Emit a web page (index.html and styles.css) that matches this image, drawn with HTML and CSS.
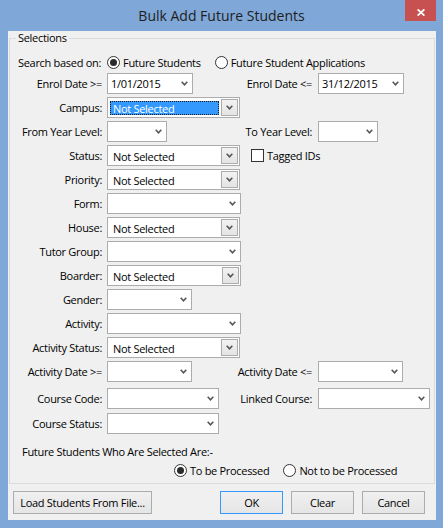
FILE: index.html
```html
<!DOCTYPE html>
<html>
<head>
<meta charset="utf-8">
<title>Bulk Add Future Students</title>
<link rel="stylesheet" href="styles.css">
</head>
<body>
<div class="window">
  <div class="titlebar">
    <span class="title">Bulk Add Future Students</span>
    <span class="close"><svg width="8" height="7" viewBox="0 0 8 7"><path d="M0.6 0.4 L7.4 6.6 M7.4 0.4 L0.6 6.6" stroke="#fff" stroke-width="1.8" fill="none"/></svg></span>
  </div>
  <div class="client">
    <fieldset class="group">
      <legend>Selections</legend>
      <div class="form">
        <div class="row search">
          <span class="lbl">Search based on:</span>
          <div class="opts">
            <span class="opt"><span class="radio on"></span><span>Future Students</span></span>
            <span class="opt"><span class="radio"></span><span>Future Student Applications</span></span>
          </div>
        </div>
        <div class="row enrol">
          <span class="lbl">Enrol Date &gt;=</span>
          <div class="combo date w86"><span class="val">1/01/2015</span><svg class="chev" width="7" height="5" viewBox="0 0 7 5"><path d="M0.7 0.8 L3.5 3.8 L6.3 0.8" stroke="#555" stroke-width="1.6" fill="none"/></svg></div>
          <span class="lbl2">Enrol Date &lt;=</span>
          <div class="combo date w86 c4"><span class="val">31/12/2015</span><svg class="chev" width="7" height="5" viewBox="0 0 7 5"><path d="M0.7 0.8 L3.5 3.8 L6.3 0.8" stroke="#555" stroke-width="1.6" fill="none"/></svg></div>
        </div>
        <div class="row">
          <span class="lbl">Campus:</span>
          <div class="combo list w133"><span class="val sel">Not Selected</span><span class="dd"><svg class="chev" width="7" height="5" viewBox="0 0 7 5"><path d="M0.7 0.8 L3.5 3.8 L6.3 0.8" stroke="#555" stroke-width="1.6" fill="none"/></svg></span></div>
        </div>
        <div class="row">
          <span class="lbl">From Year Level:</span>
          <div class="combo w60"><span class="val"></span><svg class="chev" width="7" height="5" viewBox="0 0 7 5"><path d="M0.7 0.8 L3.5 3.8 L6.3 0.8" stroke="#555" stroke-width="1.6" fill="none"/></svg></div>
          <span class="lbl2">To Year Level:</span>
          <div class="combo w60 c4"><span class="val"></span><svg class="chev" width="7" height="5" viewBox="0 0 7 5"><path d="M0.7 0.8 L3.5 3.8 L6.3 0.8" stroke="#555" stroke-width="1.6" fill="none"/></svg></div>
        </div>
        <div class="row">
          <span class="lbl">Status:</span>
          <div class="combo list w133"><span class="val">Not Selected</span><span class="dd"><svg class="chev" width="7" height="5" viewBox="0 0 7 5"><path d="M0.7 0.8 L3.5 3.8 L6.3 0.8" stroke="#555" stroke-width="1.6" fill="none"/></svg></span></div>
          <span class="check"><span class="box"></span><span>Tagged IDs</span></span>
        </div>
        <div class="row">
          <span class="lbl">Priority:</span>
          <div class="combo list w133"><span class="val">Not Selected</span><span class="dd"><svg class="chev" width="7" height="5" viewBox="0 0 7 5"><path d="M0.7 0.8 L3.5 3.8 L6.3 0.8" stroke="#555" stroke-width="1.6" fill="none"/></svg></span></div>
        </div>
        <div class="row">
          <span class="lbl">Form:</span>
          <div class="combo w134"><span class="val"></span><svg class="chev" width="7" height="5" viewBox="0 0 7 5"><path d="M0.7 0.8 L3.5 3.8 L6.3 0.8" stroke="#555" stroke-width="1.6" fill="none"/></svg></div>
        </div>
        <div class="row">
          <span class="lbl">House:</span>
          <div class="combo list w133"><span class="val">Not Selected</span><span class="dd"><svg class="chev" width="7" height="5" viewBox="0 0 7 5"><path d="M0.7 0.8 L3.5 3.8 L6.3 0.8" stroke="#555" stroke-width="1.6" fill="none"/></svg></span></div>
        </div>
        <div class="row">
          <span class="lbl">Tutor Group:</span>
          <div class="combo w134"><span class="val"></span><svg class="chev" width="7" height="5" viewBox="0 0 7 5"><path d="M0.7 0.8 L3.5 3.8 L6.3 0.8" stroke="#555" stroke-width="1.6" fill="none"/></svg></div>
        </div>
        <div class="row">
          <span class="lbl">Boarder:</span>
          <div class="combo list w134"><span class="val">Not Selected</span><span class="dd"><svg class="chev" width="7" height="5" viewBox="0 0 7 5"><path d="M0.7 0.8 L3.5 3.8 L6.3 0.8" stroke="#555" stroke-width="1.6" fill="none"/></svg></span></div>
        </div>
        <div class="row">
          <span class="lbl">Gender:</span>
          <div class="combo w85"><span class="val"></span><svg class="chev" width="7" height="5" viewBox="0 0 7 5"><path d="M0.7 0.8 L3.5 3.8 L6.3 0.8" stroke="#555" stroke-width="1.6" fill="none"/></svg></div>
        </div>
        <div class="row">
          <span class="lbl">Activity:</span>
          <div class="combo w134"><span class="val"></span><svg class="chev" width="7" height="5" viewBox="0 0 7 5"><path d="M0.7 0.8 L3.5 3.8 L6.3 0.8" stroke="#555" stroke-width="1.6" fill="none"/></svg></div>
        </div>
        <div class="row">
          <span class="lbl">Activity Status:</span>
          <div class="combo list w133"><span class="val">Not Selected</span><span class="dd"><svg class="chev" width="7" height="5" viewBox="0 0 7 5"><path d="M0.7 0.8 L3.5 3.8 L6.3 0.8" stroke="#555" stroke-width="1.6" fill="none"/></svg></span></div>
        </div>
        <div class="row">
          <span class="lbl">Activity Date &gt;=</span>
          <div class="combo date w85"><span class="val"></span><svg class="chev" width="7" height="5" viewBox="0 0 7 5"><path d="M0.7 0.8 L3.5 3.8 L6.3 0.8" stroke="#555" stroke-width="1.6" fill="none"/></svg></div>
          <span class="lbl2">Activity Date &lt;=</span>
          <div class="combo date w85 c4"><span class="val"></span><svg class="chev" width="7" height="5" viewBox="0 0 7 5"><path d="M0.7 0.8 L3.5 3.8 L6.3 0.8" stroke="#555" stroke-width="1.6" fill="none"/></svg></div>
        </div>
        <div class="row course">
          <span class="lbl">Course Code:</span>
          <div class="combo w112"><span class="val"></span><svg class="chev" width="7" height="5" viewBox="0 0 7 5"><path d="M0.7 0.8 L3.5 3.8 L6.3 0.8" stroke="#555" stroke-width="1.6" fill="none"/></svg></div>
          <span class="lbl2">Linked Course:</span>
          <div class="combo w112 c4"><span class="val"></span><svg class="chev" width="7" height="5" viewBox="0 0 7 5"><path d="M0.7 0.8 L3.5 3.8 L6.3 0.8" stroke="#555" stroke-width="1.6" fill="none"/></svg></div>
        </div>
        <div class="row cstatus">
          <span class="lbl">Course Status:</span>
          <div class="combo w112"><span class="val"></span><svg class="chev" width="7" height="5" viewBox="0 0 7 5"><path d="M0.7 0.8 L3.5 3.8 L6.3 0.8" stroke="#555" stroke-width="1.6" fill="none"/></svg></div>
        </div>
        <div class="note">Future Students Who Are Selected Are:-</div>
        <div class="proc">
          <span class="opt"><span class="radio on"></span><span>To be Processed</span></span>
          <span class="opt"><span class="radio"></span><span>Not to be Processed</span></span>
        </div>
      </div>
    </fieldset>
    <div class="buttons">
      <button class="btn load">Load Students From File...</button>
      <button class="btn ok">OK</button>
      <button class="btn clear">Clear</button>
      <button class="btn cancel">Cancel</button>
    </div>
  </div>
</div>
</body>
</html>
```

FILE: styles.css
```css
* { box-sizing: border-box; }
html, body { margin: 0; padding: 0; }
body {
  width: 443px;
  height: 528px;
  font-family: "Open Sans", "Noto Sans", sans-serif;
  font-size: 11px;
  letter-spacing: -0.3px;
  color: #000;
  overflow: hidden;
}
.window {
  width: 443px;
  height: 528px;
  background: #7fa7d7;
  display: flex;
  flex-direction: column;
}
.titlebar {
  height: 31px;
  flex: none;
  display: grid;
  grid-template-columns: 1fr auto 1fr;
}
.title {
  grid-column: 2;
  font-size: 14px;
  letter-spacing: 0;
  line-height: 31px;
  color: #1e1e1e;
  white-space: nowrap;
}
.close {
  grid-column: 3;
  justify-self: end;
  margin-right: 7px;
  width: 31px;
  height: 21px;
  background: #c75050;
  display: flex;
  justify-content: center;
  padding-top: 9px;
}
.close svg { display: block; }
.client {
  flex: 1;
  margin: 0 7px 8px 8px;
  background: #f0f0f0;
  display: flex;
  flex-direction: column;
}
.group {
  margin: 0 1px;
  padding: 0 0 6px 0;
  border: 1px solid #dcdcdc;
  min-width: 0;
}
.group legend {
  margin-left: 6px;
  padding: 0 2px;
  height: 14px;
  line-height: 14px;
}
.form { padding-top: 7px; }
.row {
  display: grid;
  grid-template-columns: 97px 119px 92px 1fr;
  height: 21px;
  margin-top: 3px;
  align-items: center;
}
.row.search { height: 20px; margin-top: 0; }
.row.enrol { margin-top: 1px; }
.row.course { margin-top: 6px; }
.row.cstatus { margin-top: 4px; }
.lbl {
  grid-column: 1;
  padding-right: 5px;
  text-align: right;
  white-space: nowrap;
}
.row.search .lbl { padding-right: 6px; }
.lbl2 {
  grid-column: 3;
  padding-right: 6px;
  text-align: right;
  white-space: nowrap;
}
.opts {
  grid-column: 2 / 5;
  display: flex;
  align-items: center;
}
.opt {
  display: inline-flex;
  align-items: center;
  gap: 3px;
  white-space: nowrap;
}
.opt + .opt { margin-left: 14px; }
.radio {
  width: 13px;
  height: 13px;
  border: 1px solid #333;
  border-radius: 50%;
  background: #fff;
  display: flex;
  align-items: center;
  justify-content: center;
}
.radio.on::after {
  content: "";
  width: 7px;
  height: 7px;
  border-radius: 50%;
  background: #2a2a2a;
}
.check {
  grid-column: 3 / 5;
  margin-left: 25px;
  display: flex;
  align-items: center;
  gap: 3px;
  white-space: nowrap;
}
.box {
  width: 13px;
  height: 13px;
  border: 1px solid #333;
  background: #fff;
}
.combo {
  grid-column: 2;
  height: 21px;
  border: 1px solid #acacac;
  background: #fff;
  display: flex;
  align-items: center;
  padding: 0 4px 0 5px;
}
.combo.c4 { grid-column: 4; }
.combo.date { padding-left: 3px; padding-right: 4px; }
.combo .val { flex: 1; white-space: nowrap; }
.combo .chev { display: block; flex: none; }
.combo.list { padding: 0; align-items: stretch; }
.combo.list .val {
  margin: 3px 1px 2px 2px;
  padding-left: 3px;
  display: flex;
  align-items: center;
}
.combo.list .val.sel {
  background: #3399ff;
  color: #fff;
  outline: 1px dotted #1a1a1a;
  outline-offset: -1px;
}
.combo.list .dd {
  flex: none;
  width: 17px;
  margin: 1px;
  border: 1px solid #acacac;
  background: linear-gradient(#f2f2f2, #e4e4e4);
  display: flex;
  align-items: center;
  justify-content: center;
}
.w60 { width: 60px; }
.w85 { width: 85px; }
.w86 { width: 86px; }
.w112 { width: 112px; }
.w133 { width: 133px; }
.w134 { width: 134px; }
.note {
  margin-top: 10px;
  height: 16px;
  line-height: 16px;
  padding-left: 12px;
  white-space: nowrap;
}
.proc {
  margin-top: 3px;
  height: 14px;
  display: flex;
  align-items: center;
  padding-left: 164px;
}
.buttons {
  display: flex;
  margin-top: 7px;
  padding: 0 11px 0 5px;
}
.btn {
  height: 23px;
  border: 1px solid #acacac;
  background: linear-gradient(#f0f0f0, #e5e5e5);
  font: inherit;
  letter-spacing: inherit;
  color: #000;
  padding: 0;
  margin: 0;
  display: flex;
  align-items: center;
  justify-content: center;
  white-space: nowrap;
}
.btn.load { width: 139px; }
.btn.ok, .btn.clear, .btn.cancel { width: 63px; }
.btn.ok { margin-left: auto; border-color: #3399ff; }
.btn.clear, .btn.cancel { margin-left: 8px; }
```
